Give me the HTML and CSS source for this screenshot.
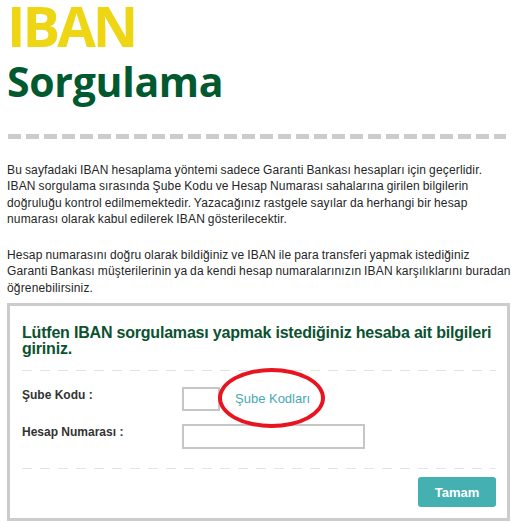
FILE: index.html
```html
<!DOCTYPE html>
<html lang="tr">
<head>
<meta charset="utf-8">
<title>IBAN Sorgulama</title>
<link rel="stylesheet" href="styles.css">
</head>
<body>
<div class="page">
  <h1 class="title"><span class="t1">IBAN</span><span class="t2">Sorgulama</span></h1>
  <div class="rule"></div>
  <p class="intro">Bu sayfadaki IBAN hesaplama yöntemi sadece Garanti Bankası hesapları için geçerlidir.<br>IBAN sorgulama sırasında Şube Kodu ve Hesap Numarası sahalarına girilen bilgilerin<br>doğruluğu kontrol edilmemektedir. Yazacağınız rastgele sayılar da herhangi bir hesap<br>numarası olarak kabul edilerek IBAN gösterilecektir.</p>
  <p class="intro second">Hesap numarasını doğru olarak bildiğiniz ve IBAN ile para transferi yapmak istediğiniz<br>Garanti Bankası müşterilerinin ya da kendi hesap numaralarınızın IBAN karşılıklarını buradan<br>öğrenebilirsiniz.</p>
  <div class="box">
    <h2 class="box-title">Lütfen IBAN sorgulaması yapmak istediğiniz hesaba ait bilgileri giriniz.</h2>
    <div class="sep"></div>
    <div class="row">
      <label class="lbl">Şube Kodu :</label>
      <input class="inp short" type="text">
      <a class="link" href="#">Şube Kodları</a>
    </div>
    <div class="row row2">
      <label class="lbl">Hesap Numarası :</label>
      <input class="inp long" type="text">
    </div>
    <div class="sep sep2"></div>
    <div class="actions"><button class="btn" type="button">Tamam</button></div>
    <div class="mark"></div>
  </div>
</div>
</body>
</html>
```
FILE: styles.css
```css
html { overflow-x: hidden; }
html, body { margin: 0; padding: 0; background: #fff; }
body { font-family: "Liberation Sans", Arial, sans-serif; }
.page { padding-left: 7px; width: 504px; }
.title { margin: 0; font-family: "Open Sans", sans-serif; font-weight: 700; }
.t1 { display: block; font-size: 56px; line-height: 51px; letter-spacing: -3px; color: #eed614; }
.t2 { display: block; font-size: 41px; line-height: 60px; letter-spacing: -0.3px; color: #00592f; }
.rule {
  margin: 23px 0 0 1px; width: 498px; height: 5px;
  background: repeating-linear-gradient(to right, #cccccc 0 13px, transparent 13px 18px);
}
.intro {
  margin: 23px 0 0; width: 504px; white-space: nowrap;
  font-size: 12px; line-height: 16.3px; letter-spacing: 0.16px; word-spacing: -0.6px; color: #262626;
}
.intro.second { margin-top: 20px; }
.box {
  position: relative; margin-top: 7px; width: 474px;
  border: 3px solid #cccccc; padding: 19px 11px 11px 12px;
}
.box-title { margin: 0; font-size: 16px; line-height: 16px; font-weight: 700; letter-spacing: -0.2px; color: #0b5230; }
.sep {
  margin-top: 13px; height: 1px;
  background: repeating-linear-gradient(to right, #e3e3e3 0 10px, transparent 10px 18px);
}
.row { display: flex; align-items: flex-start; margin-top: 16px; }
.row2 { margin-top: 13px; }
.lbl { width: 160px; flex: none; font-size: 12px; line-height: 16px; font-weight: 700; color: #333; }
.inp { box-sizing: border-box; margin: 0; border: 2px solid #c6c6c6; background: #fff; padding: 0 4px; }
.short { width: 38px; height: 24px; }
.long { width: 183px; height: 25px; }
.link { align-self: center; margin-left: 15px; font-size: 13px; line-height: 16px; color: #45a8b6; text-decoration: none; }
.sep2 { margin-top: 19px; }
.actions { display: flex; justify-content: flex-end; margin-top: 8px; }
.btn {
  width: 78px; height: 30px; border: 0; border-radius: 3px; background: #45b0b2;
  color: #fff; font-family: "Liberation Sans", Arial, sans-serif; font-size: 13px; font-weight: 700; padding: 0;
}
.mark {
  position: absolute; left: 208px; top: 62px; width: 99px; height: 52px;
  border: 4px solid #e8141f; border-radius: 50%;
}
```
